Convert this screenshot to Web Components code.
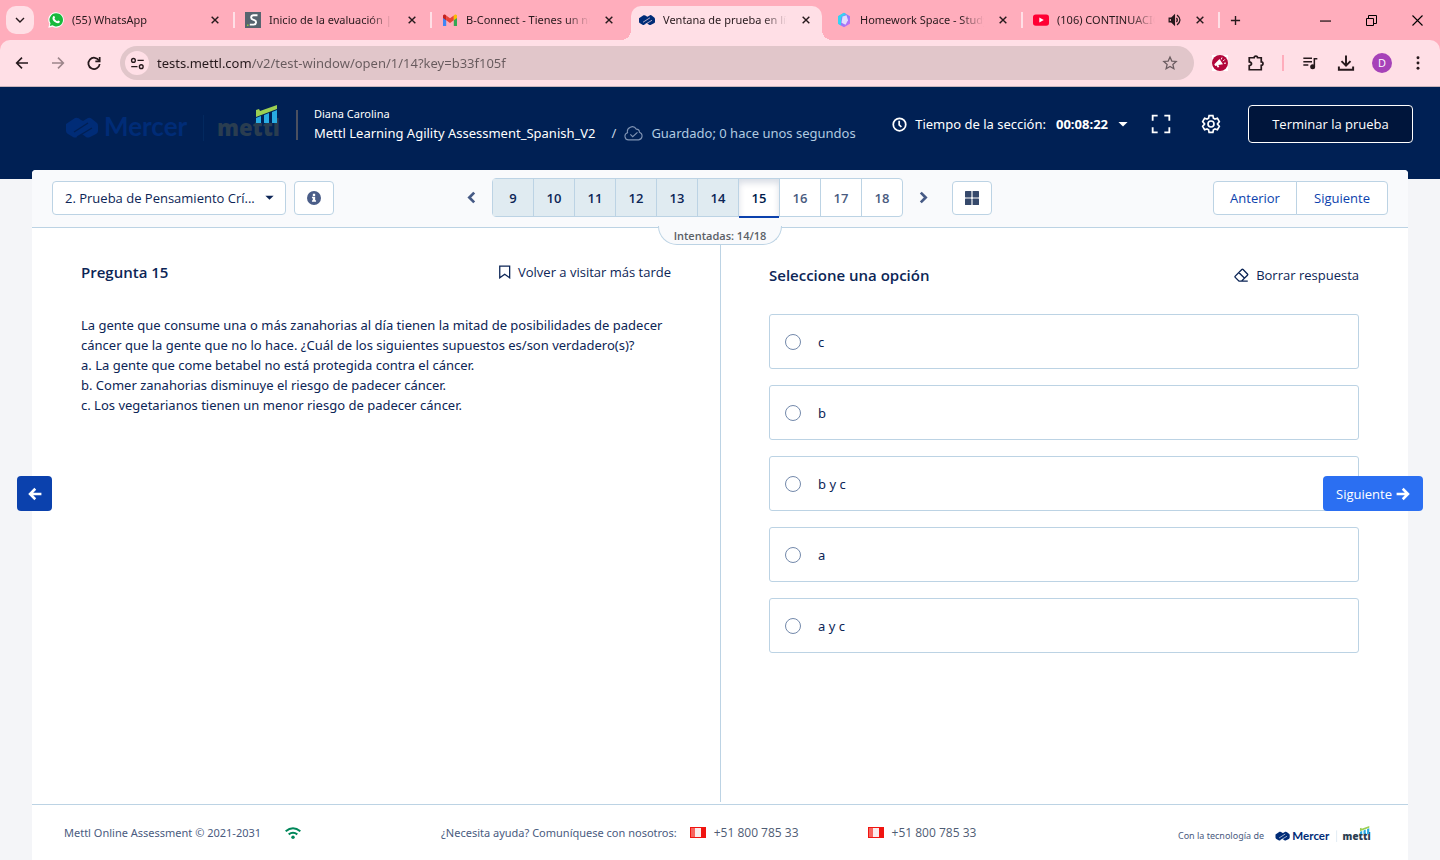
<!DOCTYPE html>
<html lang="es">
<head>
<meta charset="utf-8">
<title>Ventana de prueba en línea</title>
<style>
  html, body { margin: 0; }
  body {
    font-family: "Open Sans", "Noto Sans", sans-serif;
    font-size: 13px;
    line-height: 20px;
    color: #0c2556;
    --line: #bcd3e4;
    --ink: #0c2556;
    --navy: #002054;
    --wide: "Noto Sans", "Open Sans", sans-serif;
  }
</style>
</head>
<body>
<test-app></test-app>

<script>
const reset = `
  *, *::before, *::after { box-sizing: border-box; }
  button, input, select { font: inherit; color: inherit; margin: 0; padding: 0; }
  button { background: none; border: 0; cursor: pointer; }
  a { color: inherit; text-decoration: none; }
  h2, p { margin: 0; }
`;

function define(name, css, html, setup) {
  const template = document.createElement('template');
  template.innerHTML = `<style>${reset}${css}</style>${html}`;
  customElements.define(name, class extends HTMLElement {
    connectedCallback() {
      if (this.shadowRoot) return;
      const root = this.attachShadow({ mode: 'open' });
      root.append(template.content.cloneNode(true));
      if (setup) setup.call(this, root);
    }
  });
}

const stroke = (w, body, box = 24) =>
  `<svg viewBox="0 0 ${box} ${box}" fill="none" stroke="currentColor" stroke-width="${w}">${body}</svg>`;
const fill = (body, box = 24) =>
  `<svg viewBox="0 0 ${box} ${box}" fill="currentColor">${body}</svg>`;

const waves = (a, b) => `
  <path d="M0 6 L9 0 Q12 -1 15 2 L17 3 L22 0 Q24 -1 26 1 L31 5 Q32 6 32 8 V13 Q32 15 30 16 L24 19 Q22 20 20 19 L16 16 L11 19 Q9 20 7 19 L2 16 Q0 15 0 13 Z" fill="${a}"/>
  <path d="M8 14 L22 5 M11 19 L26 10" stroke="${b}" stroke-width="1.4" fill="none"/>`;

const icons = {
  chevronDown: stroke(2.8, '<path d="M4 8l8 8 8-8"/>'),
  close: stroke(3.4, '<path d="M4 4l16 16M20 4L4 20"/>'),
  plus: stroke(3, '<path d="M12 2v20M2 12h20"/>'),
  minimize: stroke(1, '<path d="M0 5.5h10"/>', 10),
  restore: stroke(1, '<path d="M.5 3.5h7v7h-7zM2.500 3V.5h8v8H8"/>', 11),
  closeWindow: stroke(1.1, '<path d="M.5.5l10 10M10.500.5l-10 10"/>', 11),
  audio: `<svg viewBox="0 0 24 24" fill="none" stroke="currentColor" stroke-width="2.200"><path d="M2 9v6h4l5 5V4L6 9z"/><path d="M10 6v12L6 14V10z" fill="currentColor"/><path d="M14.500 8.500q3 3.500 0 7M15.500 3.500q10 8.500 0 17"/></svg>`,
  whatsapp: `<svg viewBox="0 0 16 16"><path d="M8 .2a7.600 7.600 0 0 0-6.600 11.500L.3 15.800l4.200-1.100A7.700 7.700 0 1 0 8 .2z" fill="#fff"/><path d="M8 1.300a6.500 6.500 0 0 0-5.500 10l-.7 2.700 2.800-.7A6.600 6.600 0 1 0 8 1.300z" fill="#18b93c"/><path d="M5.200 4.200c.4-.4 1-.4 1.200 0l.6 1.300c.1.300-.1.500-.6 1 .5 1.200 1.500 2.200 2.900 2.800.4-.6.700-.9 1-.7l1.400.7c.3.200.2.600 0 1-.8 1.500-2.400 1.300-4.500 0C5.300 9.200 3.500 6.500 5.200 4.200z" fill="#fff"/></svg>`,
  sova: `<svg viewBox="0 0 16 16"><path d="M0 0h16v16H0z" fill="#56646f"/><path d="M12.500 3.200H8.600q-2.200 0-2.400 2-.2 2 1.800 2.500l1.300.4q2 .6 1.700 2.500-.2 2-2.400 2H4.800" fill="none" stroke="#fff" stroke-width="1.900"/><path d="M2 12.500h1.500V14H2z" fill="#8dc63f"/></svg>`,
  gmail: `<svg viewBox="0 0 16 16"><path d="M1 3v11h3.200V7z" fill="#4285f4"/><path d="M15 3v11h-3.200V7z" fill="#34a853"/><path d="M4.200 3.400v4.800L8 11l3.800-2.800V3.400L8 6.300z" fill="#ea4335"/><path d="M1 4q0-2 2-1.500l1.200.9v4.800L1 5.900z" fill="#c5221f"/><path d="M15 4q0-2-2-1.500l-1.200.9v4.800L15 5.900z" fill="#fbbc04"/></svg>`,
  mercer: `<svg viewBox="0 -6.500 32 32">${waves('#002c77', '#ffdfe6')}</svg>`,
  hex: `<svg viewBox="0 0 16 16"><defs><linearGradient id="g" x2="1" y2="1"><stop stop-color="#22d8f5"/><stop offset=".5" stop-color="#8b7bfa"/><stop offset="1" stop-color="#d66cf0"/></linearGradient></defs><path d="M8 .8l6 3.500v7.400L8 15.300l-6-3.600V4.300z" fill="url(#g)"/><path d="M2 4.300L8 .8l2 1.200-5 3v8.500l-3-1.800z" fill="#35d3f2"/><path d="M6.500 4.500l4-1.200 1.500 5-2.500 4.500-4-2z" fill="#e3dcfd"/></svg>`,
  youtube: `<svg viewBox="0 0 16 16"><rect y="2.400" width="16" height="11.400" rx="2.800" fill="#ff0033"/><path d="M6.300 5.600l4.500 2.500-4.500 2.500z" fill="#fff"/></svg>`,
  back: stroke(2.4, '<path d="M21 12H4M12 4l-8 8 8 8"/>'),
  forward: stroke(2.4, '<path d="M3 12h17M12 4l8 8-8 8"/>'),
  reload: stroke(2.6, '<path d="M19.500 8.500A8.500 8.500 0 1 0 20.500 13.500"/><path d="M20.500 3v6.500H14"/>'),
  tune: stroke(2.2, '<circle cx="5.500" cy="7" r="3"/><path d="M12 7h10M2 17h10"/><circle cx="18" cy="17" r="3"/>'),
  star: stroke(1.9, '<path d="M12 3l2.700 6.100 6.600.6-5 4.400 1.500 6.500L12 17.200l-5.800 3.400 1.500-6.500-5-4.400 6.600-.6z"/>'),
  megaphone: `<svg viewBox="0 0 16 16"><path d="M0 0h16v16H0z" fill="#fff"/><circle cx="8" cy="8" r="8" fill="#b3063a"/><path d="M2.300 9.300L7.500 4l3.500 5.200-4.700.7 1 2-1.600.6-1.200-2-1.300.4z" fill="#fff"/><path d="M9.200 4.500l.8-2M11 6.200l1.800-1.800M12 8.300l2-.2" stroke="#fff"/></svg>`,
  puzzle: stroke(2.3, '<path d="M3 5h6.500a2.300 2.300 0 0 1 4.600 0H19v5.500a2.300 2.300 0 0 1 0 4.600V21H3v-5.500q3-.5 3-2.500T3 10.500z"/>'),
  queue: `<svg viewBox="0 0 24 24" fill="none" stroke="currentColor" stroke-width="2.300"><path d="M2 5h13M2 10h13M2 15h7.500M18.500 17V5.500H23"/><circle cx="16" cy="17.500" r="2.600" fill="currentColor"/></svg>`,
  download: stroke(2.6, '<path d="M12 2v13M6 9.500l6 6 6-6M2.500 16.500V21h19v-4.500"/>'),
  dots: fill('<circle cx="12" cy="4" r="2.200"/><circle cx="12" cy="12" r="2.200"/><circle cx="12" cy="20" r="2.200"/>'),
  cloud: stroke(1.4, '<path d="M6 20a4.600 4.600 0 0 1-1.500-9A6 6 0 0 1 15.500 6.500a4 4 0 0 1 4 4A4.900 4.900 0 0 1 18.500 20z"/><path d="M8 13l3 3 6-5.500"/>'),
  clock: stroke(2.8, '<circle cx="12" cy="12" r="10"/><path d="M11.500 6v6.500l3.500 3.500"/>'),
  expand: stroke(2.2, '<path d="M2 8V2h6M16 2h6v6M22 16v6h-6M8 22H2v-6"/>'),
  gear: stroke(2, '<path d="M9.700 2h4.600l.6 3 1.900 1.100 2.900-1 2.300 4-2.300 2.900 2.300 2.900-2.300 4-2.900-1-1.900 1.100-.6 3H9.700l-.6-3-1.900-1.100-2.900 1-2.300-4L4.300 12 2 9.100l2.300-4 2.900 1L9.100 5z"/><circle cx="12" cy="12" r="3.600"/>'),
  caret: fill('<path d="M1 7h22L12 18z"/>'),
  info: `<svg viewBox="0 0 24 24"><circle cx="12" cy="12" r="12" fill="#4a5d88"/><path d="M10 4.500h4v4h-4zM8.500 10H14v6h1.500v2.500h-7V16H10v-3.500H8.500z" fill="#fff"/></svg>`,
  left: stroke(5, '<path d="M17 3l-9 9 9 9"/>'),
  right: stroke(5, '<path d="M7 3l9 9-9 9"/>'),
  grid: fill('<rect x="0" y="0" width="11" height="11" rx="1"/><rect x="13" y="0" width="11" height="11" rx="1"/><rect x="0" y="13" width="11" height="11" rx="1"/><rect x="13" y="13" width="11" height="11" rx="1"/>'),
  bookmark: stroke(2.2, '<path d="M3 2h17v20l-8.500-6L3 22z"/>'),
  eraser: stroke(2.2, '<path d="M22 21H8l-6-6q-1-1 0-2L12.500 2.500q1-1 2 0l7 7q1 1 0 2L12 21M8 7.500l9 9"/>'),
  boldLeft: stroke(4.4, '<path d="M23 12H4M12.500 3L3.500 12l9 9"/>'),
  boldRight: stroke(4.4, '<path d="M1 12h19M11.500 3l9 9-9 9"/>'),
  wifi: `<svg viewBox="0 0 24 24" fill="none" stroke="#00875a" stroke-width="3"><path d="M1 9.500q11-9 22 0M5.500 14q6.500-5 13 0"/><circle cx="12" cy="18.500" r="2.600" fill="#00875a" stroke="none"/></svg>`,
  peru: `<svg viewBox="0 0 16 11"><path d="M0 0h16v11H0z" fill="#f01410"/><path d="M1 1h4v9H1z" fill="#f8645e"/><path d="M5 1h6v9H5z" fill="#fbecec"/></svg>`
};

class UiIcon extends HTMLElement {
  connectedCallback() {
    if (this.shadowRoot) return;
    this.attachShadow({ mode: 'open' }).innerHTML = `
      <style>
        :host { display: inline-block; flex: none; width: 16px; height: 16px; }
        svg { display: block; width: 100%; height: 100%; }
      </style>${icons[this.getAttribute('name')]}`;
  }
}
customElements.define('ui-icon', UiIcon);

define('brand-logo', `
  :host { display: block; flex: none; width: 218px; }
  svg { display: block; width: 100%; }
`, `
  <svg viewBox="0 0 218 44" role="img" aria-label="Mercer Mettl">
    <g transform="translate(1 13)">${waves('#002c77', 'var(--logo-gap, #002054)')}</g>
    <text x="39" y="31" font-family="Lato, sans-serif" font-weight="700" font-size="26" fill="#002c77">Mercer</text>
    <path d="M138.500 10v26" stroke="var(--logo-line, #03295f)" stroke-width="1"/>
    <text x="152" y="31" font-family="Open Sans, sans-serif" font-weight="800" font-size="22" fill="#2a3d50">mettl</text>
    <path d="M191 13v5h5v-7zM199 10v8h5V8zM207 7v11h5V5z" fill="#29abe2"/>
    <path d="M191 5l3-1 1 2 17-6v4L191 12z" fill="#9bcf52"/>
  </svg>
`);

define('browser-tab', `
  :host { display: flex; flex: 0 1 197px; min-width: 0; align-items: center; height: 40px; padding-left: 11px; position: relative; color: #26191c; font-family: var(--wide); font-size: 11px; }
  .title { flex: 1; min-width: 0; margin: 0 13px 0 8px; overflow: hidden; white-space: nowrap; -webkit-mask-image: linear-gradient(to left, transparent, #000 24px); mask-image: linear-gradient(to left, transparent, #000 24px); }
  button { display: flex; width: 12px; margin-right: 12px; padding: 1px; }
  button ui-icon { width: 10px; height: 10px; }
  ::slotted(ui-icon[slot="audio"]) { width: 14px; height: 14px; margin-right: 12px; }
  .line { width: 2px; height: 16px; margin-right: -1px; background: #ffdfe6; }
  :host([active]) .line, :host([last-before]) .line { visibility: hidden; }
  :host([active])::before { content: ""; position: absolute; inset: 6px 3px 0; border-radius: 10px 10px 0 0; background: #ffdfe6; }
  :host([active])::after { content: ""; position: absolute; bottom: 0; left: -7px; right: -7px; height: 10px;
    background: radial-gradient(circle at 0 0, transparent 10px, #ffdfe6 10px) left / 10px 10px no-repeat, radial-gradient(circle at 100% 0, transparent 10px, #ffdfe6 10px) right / 10px 10px no-repeat; }
  slot, .title, button { position: relative; z-index: 1; }
  ::slotted(ui-icon) { position: relative; z-index: 1; }
`, `
  <slot name="icon"></slot><span class="title"><slot></slot></span><slot name="audio"></slot>
  <button aria-label="Cerrar pestaña"><ui-icon name="close"></ui-icon></button><span class="line"></span>
`);

define('browser-frame', `
  :host { display: block; background: #ffadbc; color: #26191c; }
  .tabs { display: flex; align-items: center; height: 40px; padding-left: 6px; }
  .list { display: flex; width: 28px; height: 28px; margin-right: 3px; border-radius: 10px; background: #ffdfe6; align-items: center; justify-content: center; }
  .list ui-icon { width: 12px; height: 12px; }
  .new { display: flex; width: 32px; justify-content: center; }
  .new ui-icon { width: 11px; height: 11px; }
  .window { display: flex; margin-left: auto; color: #000; }
  .window button { display: flex; width: 46px; height: 40px; align-items: center; justify-content: center; }
  .window ui-icon { width: 11px; height: 11px; }
  .bar { display: flex; align-items: center; height: 47px; padding: 0 4px; border-radius: 10px 10px 0 0; border-bottom: 1px solid #c9b4bc; background: #ffdfe6; }
  .bar > button { display: flex; width: 36px; height: 36px; align-items: center; justify-content: center; }
  .bar .large { width: 18px; height: 18px; }
  .off { opacity: .45; }
  .omnibox { display: flex; flex: 1; align-items: center; height: 34px; margin: 0 8px; padding: 0 16px 0 5px; border-radius: 17px; background: #e1c6ca; }
  .omnibox button { display: flex; }
  .site { width: 24px; height: 24px; border-radius: 12px; background: #ffdfe6; align-items: center; justify-content: center; }
  .site ui-icon { width: 15px; height: 15px; }
  input { flex: 1; min-width: 0; margin-left: 8px; border: 0; outline: 0; font-family: var(--wide); color: #5c5053;
    background: linear-gradient(to right, #26191c var(--host), #675a5d var(--host)); --host: 95px;
    -webkit-background-clip: text; background-clip: text; -webkit-text-fill-color: transparent; }
  .rule { width: 2px; height: 16px; margin: 0 8px; background: #ffadbc; }
  .avatar { width: 20px; height: 20px; border-radius: 10px; background: #a642b8; color: #fff; font-size: 11px; line-height: 20px; text-align: center; }
`, `
  <div class="tabs">
    <button class="list" aria-label="Buscar pestañas"><ui-icon name="chevronDown"></ui-icon></button>
    <browser-tab><ui-icon slot="icon" name="whatsapp"></ui-icon>(55) WhatsApp</browser-tab>
    <browser-tab><ui-icon slot="icon" name="sova"></ui-icon>Inicio de la evaluación |</browser-tab>
    <browser-tab last-before><ui-icon slot="icon" name="gmail"></ui-icon>B-Connect - Tienes un nuevo</browser-tab>
    <browser-tab active><ui-icon slot="icon" name="mercer"></ui-icon>Ventana de prueba en línea</browser-tab>
    <browser-tab><ui-icon slot="icon" name="hex"></ui-icon>Homework Space - Study</browser-tab>
    <browser-tab><ui-icon slot="icon" name="youtube"></ui-icon>(106) CONTINUACIÓN<ui-icon slot="audio" name="audio"></ui-icon></browser-tab>
    <button class="new" aria-label="Nueva pestaña"><ui-icon name="plus"></ui-icon></button>
    <div class="window">
      <button aria-label="Minimizar"><ui-icon name="minimize"></ui-icon></button>
      <button aria-label="Restaurar"><ui-icon name="restore"></ui-icon></button>
      <button aria-label="Cerrar"><ui-icon name="closeWindow"></ui-icon></button>
    </div>
  </div>
  <div class="bar">
    <button aria-label="Atrás"><ui-icon name="back"></ui-icon></button>
    <button class="off" aria-label="Adelante"><ui-icon name="forward"></ui-icon></button>
    <button aria-label="Recargar"><ui-icon name="reload"></ui-icon></button>
    <div class="omnibox">
      <button class="site" aria-label="Información del sitio"><ui-icon name="tune"></ui-icon></button>
      <input type="text" aria-label="Dirección" spellcheck="false" value="tests.mettl.com/v2/test-window/open/1/14?key=b33f105f">
      <button aria-label="Marcador" style="color:#6b5c60"><ui-icon name="star"></ui-icon></button>
    </div>
    <button aria-label="Extensión"><ui-icon name="megaphone"></ui-icon></button>
    <button aria-label="Extensiones"><ui-icon class="large" name="puzzle"></ui-icon></button>
    <span class="rule"></span>
    <button aria-label="Multimedia"><ui-icon name="queue"></ui-icon></button>
    <button aria-label="Descargas"><ui-icon class="large" name="download"></ui-icon></button>
    <button aria-label="Perfil"><span class="avatar">D</span></button>
    <button aria-label="Menú"><ui-icon name="dots"></ui-icon></button>
  </div>
`);

define('test-header', `
  :host { display: flex; align-items: flex-start; height: 92px; padding: 18px 27px 0 65px; background: var(--navy); color: #fff; font-family: var(--wide); }
  .who { margin-left: 13px; padding-left: 18px; position: relative; }
  .who::before { content: ""; position: absolute; left: 0; top: 5px; width: 2px; height: 30px; background: #4b5060; }
  .name { font-size: 11px; line-height: 18px; }
  .row { display: flex; align-items: center; line-height: 20px; white-space: nowrap; }
  .row ui-icon { width: 19px; height: 19px; margin: 0 8px; color: #7f93b3; }
  .slash { margin-left: 16px; color: #c7d6e6; }
  .saved { color: #b0cbe0; }
  .tools { display: flex; align-items: center; height: 38px; margin-left: auto; white-space: nowrap; }
  .tools button { display: flex; align-items: center; }
  .timer b { margin-left: 10px; font-family: "Open Sans", sans-serif; font-weight: 700; }
  .timer ui-icon { width: 15px; height: 15px; margin-right: 8px; }
  .timer .caret { width: 10px; height: 10px; margin: 0 0 0 10px; }
  .icon { margin-left: 23px; }
  .icon + .icon { margin-left: 30px; }
  .icon ui-icon { width: 20px; height: 20px; }
  .tools .finish { width: 165px; height: 38px; margin-left: 27px; justify-content: center; border: 1px solid #fff; border-radius: 4px; background: #00153b; font-family: "Open Sans", sans-serif; }
`, `
  <brand-logo></brand-logo>
  <div class="who">
    <div class="name">Diana Carolina</div>
    <div class="row"><span>Mettl Learning Agility Assessment_Spanish_V2</span><span class="slash">/</span><ui-icon name="cloud"></ui-icon><span class="saved">Guardado; 0 hace unos segundos</span></div>
  </div>
  <div class="tools">
    <button class="timer"><ui-icon name="clock"></ui-icon><span>Tiempo de la sección:</span><b>00:08:22</b><ui-icon class="caret" name="caret"></ui-icon></button>
    <button class="icon" aria-label="Pantalla completa"><ui-icon name="expand"></ui-icon></button>
    <button class="icon" aria-label="Configuración"><ui-icon name="gear"></ui-icon></button>
    <button class="finish">Terminar la prueba</button>
  </div>
`);

define('question-nav', `
  :host { display: grid; grid-template-columns: 1fr auto 1fr; align-items: center; height: 58px; padding: 0 20px 2px; position: relative; border-bottom: 1px solid var(--line); border-radius: 4px 4px 0 0; background: #f9fafc; }
  .left, .middle, .right { display: flex; align-items: center; }
  .middle { padding-left: 14px; }
  .right { justify-content: flex-end; }
  .left { gap: 8px; }
  .picker { display: grid; width: 234px; align-items: center; }
  .picker > * { grid-area: 1 / 1; }
  select { appearance: none; height: 34px; padding: 0 28px 0 12px; border: 1px solid var(--line); border-radius: 4px; background: #fff; text-overflow: ellipsis; }
  .picker ui-icon { width: 9px; height: 9px; margin-right: 12px; justify-self: end; pointer-events: none; }
  .box { display: flex; width: 40px; height: 34px; align-items: center; justify-content: center; border: 1px solid var(--line); border-radius: 4px; background: #fff; color: #36496b; }
  .box ui-icon { width: 14px; height: 14px; }
  .step { display: flex; width: 18px; justify-content: center; color: #465a85; }
  .step ui-icon { width: 13px; height: 13px; }
  ol { display: flex; margin: 0 11px 0 12px; padding: 0; list-style: none; border: 1px solid var(--line); border-radius: 4px; background: #fff; }
  li + li { border-left: 1px solid var(--line); }
  li button { width: 40px; height: 37px; display: block; color: #4a5b80; font-weight: 600; }
  li.done { background: #e0ebf1; }
  li.done button { color: var(--ink); }
  li.now button { height: 39px; margin-bottom: -2px; color: #001a4a; border-bottom: 2px solid #0b41ad; box-shadow: inset 0 4px 6px #00205426; }
  .grid { margin-left: 20px; }
  .right button { height: 34px; border: 1px solid var(--line); background: #fff; color: #0b41ad; }
  .right button:first-child { width: 84px; border-radius: 4px 0 0 4px; }
  .right button:last-child { width: 92px; margin-left: -1px; border-radius: 0 4px 4px 0; }
  .count { position: absolute; left: 50%; top: 56px; width: 124px; height: 19px; margin-left: -62px; border: 1px solid var(--line); border-top: 0; border-radius: 0 0 19px 19px; background: #f9fafc; color: #5b6067; font-size: 11px; font-weight: 600; line-height: 20px; text-align: center; }
`, `
  <div class="left">
    <div class="picker">
      <select aria-label="Sección"><option>2. Prueba de Pensamiento Crí...</option></select>
      <ui-icon name="caret"></ui-icon>
    </div>
    <button class="box" aria-label="Información"><ui-icon name="info"></ui-icon></button>
  </div>
  <div class="middle">
    <button class="step" aria-label="Preguntas previas"><ui-icon name="left"></ui-icon></button>
    <ol></ol>
    <button class="step" aria-label="Más preguntas"><ui-icon name="right"></ui-icon></button>
    <button class="box grid" aria-label="Todas las preguntas"><ui-icon name="grid"></ui-icon></button>
  </div>
  <div class="right"><button>Anterior</button><button>Siguiente</button></div>
  <div class="count">Intentadas: 14/18</div>
`, function (root) {
  const list = root.querySelector('ol');
  const current = 15;
  for (let n = 9; n <= 18; n++) {
    const item = document.createElement('li');
    item.className = n < current ? 'done' : n === current ? 'now' : '';
    item.innerHTML = `<button>${n}</button>`;
    list.append(item);
  }
});

define('question-panel', `
  :host { display: block; padding: 34px 49px 0; }
  header { display: flex; justify-content: space-between; margin-bottom: 33px; }
  h2 { font-size: 15px; font-weight: 600; line-height: 20px; }
  header button { display: flex; align-items: center; gap: 6px; height: 20px; }
  header ui-icon { width: 14px; height: 14px; }
  ::slotted(p) { margin: 0; font-family: var(--wide); }
`, `
  <header>
    <h2>Pregunta 15</h2>
    <button><ui-icon name="bookmark"></ui-icon>Volver a visitar más tarde</button>
  </header>
  <slot></slot>
`);

define('answer-panel', `
  :host { display: block; padding: 37px 49px 0 48px; border-left: 1px solid var(--line); margin-bottom: 2px; }
  header { display: flex; justify-content: space-between; margin-bottom: 29px; }
  h2 { font-size: 15px; font-weight: 600; line-height: 20px; }
  header button { display: flex; align-items: center; gap: 7px; height: 20px; }
  header ui-icon { width: 15px; height: 15px; }
  form { display: grid; gap: 16px; }
  label { display: flex; align-items: center; gap: 17px; height: 55px; padding-left: 15px; border: 1px solid var(--line); border-radius: 3px; background: #fff; font-family: var(--wide); }
  input { appearance: none; width: 16px; height: 16px; border: 1px solid #7389ab; border-radius: 50%; background: #fff; }
  input:checked { border: 5px solid #0b41ad; }
`, `
  <header>
    <h2>Seleccione una opción</h2>
    <button><ui-icon name="eraser"></ui-icon>Borrar respuesta</button>
  </header>
  <form></form>
`, function (root) {
  root.querySelector('form').innerHTML = this.getAttribute('options').split('|')
    .map(text => `<label><input type="radio" name="answer"><span>${text}</span></label>`).join('');
});

define('test-footer', `
  :host { display: flex; align-items: center; height: 56px; padding: 0 36px 0 32px; border-top: 1px solid var(--line); color: #4a5b80; font-family: var(--wide); font-size: 11px; white-space: nowrap; }
  .wifi { width: 16px; height: 16px; margin-left: 24px; }
  .help { margin-left: 140px; }
  .phone { display: flex; align-items: center; gap: 8px; margin-left: 13px; color: #4f5c74; font-family: "Open Sans", sans-serif; font-size: 12px; }
  .phone + .phone { margin-left: 69px; }
  .phone ui-icon { height: 11px; }
  .by { display: flex; align-items: center; gap: 11px; margin-left: auto; padding-top: 6px; font-size: 9px; }
  brand-logo { width: 97px; --logo-gap: #fff; --logo-line: #bcd3e4; }
`, `
  <span>Mettl Online Assessment © 2021-2031</span><ui-icon class="wifi" name="wifi"></ui-icon>
  <span class="help">¿Necesita ayuda? Comuníquese con nosotros:</span>
  <a class="phone" href="tel:+5180078533"><ui-icon name="peru"></ui-icon>+51 800 785 33</a>
  <a class="phone" href="tel:+5180078533"><ui-icon name="peru"></ui-icon>+51 800 785 33</a>
  <span class="by">Con la tecnología de<brand-logo></brand-logo></span>
`);

define('test-app', `
  :host { display: flex; flex-direction: column; min-height: 100vh; background: #f4f5f8; }
  .stage { display: flex; flex: 1; flex-direction: column; position: relative; }
  .sheet { display: flex; flex: 1; flex-direction: column; margin: -9px 32px 0; border-radius: 4px 4px 0 0; background: #fff; }
  .body { display: grid; flex: 1; grid-template-columns: 1fr 1fr; }
  .float { display: flex; align-items: center; justify-content: center; position: absolute; top: 389px; height: 35px; border-radius: 4px; color: #fff; }
  .float ui-icon { width: 14px; height: 14px; }
  .prev { left: 17px; width: 35px; background: #0b41ad; }
  .next { right: 17px; width: 100px; gap: 4px; background: #2b6ff2; }
`, `
  <browser-frame></browser-frame>
  <div class="stage">
    <test-header></test-header>
    <main class="sheet">
      <question-nav></question-nav>
      <div class="body">
        <question-panel>
          <p>La gente que consume una o más zanahorias al día tienen la mitad de posibilidades de padecer cáncer que la gente que no lo hace. ¿Cuál de los siguientes supuestos es/son verdadero(s)?<br>a. La gente que come betabel no está protegida contra el cáncer.<br>b. Comer zanahorias disminuye el riesgo de padecer cáncer.<br>c. Los vegetarianos tienen un menor riesgo de padecer cáncer.</p>
        </question-panel>
        <answer-panel options="c|b|b y c|a|a y c"></answer-panel>
      </div>
      <test-footer></test-footer>
    </main>
    <button class="float prev" aria-label="Pregunta anterior"><ui-icon name="boldLeft"></ui-icon></button>
    <button class="float next">Siguiente<ui-icon name="boldRight"></ui-icon></button>
  </div>
`);
</script>
</body>
</html>
